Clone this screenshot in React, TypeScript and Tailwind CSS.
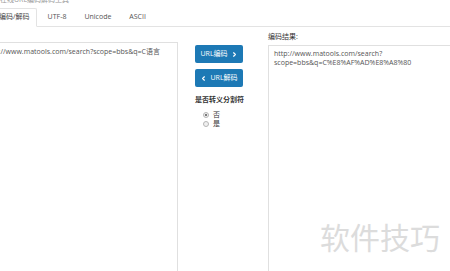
import React from "react";
import { ChevronRight, ChevronLeft } from "lucide-react";

const font = "font-['Open_Sans','Noto_Sans_CJK_SC',sans-serif]";

const Radio: React.FC<{ checked?: boolean; label: string }> = ({ checked, label }) => (
  <div className="flex items-center gap-[4px] h-[9px]">
    <span className="w-[6px] h-[6px] rounded-full border border-[#b5b5b5] bg-[#f0f0f0] flex items-center justify-center">
      {checked && <span className="w-[2px] h-[2px] rounded-full bg-[#555]" />}
    </span>
    <span className="text-[7px] leading-[9px] text-[#333]">{label}</span>
  </div>
);

const App: React.FC = () => {
  return (
    <div className={`w-[450px] h-[271px] overflow-hidden bg-white relative ${font}`}>
      {/* 页面标题（被截掉一半） */}
      <div className="h-[8px] overflow-hidden">
        <div className="-mt-[5px] text-[7px] leading-[9px] text-[#999]">在线URL编码解码工具</div>
      </div>

      {/* 标签页 */}
      <div className="flex h-[19px] border-b border-[#e3e3e3] text-[7px] text-[#555]">
        <div className="-ml-[10px] pl-[8px] pr-[6px] flex items-center border border-[#e3e3e3] border-b-white bg-white -mb-px rounded-t-[2px] text-[#444]">
          编码/解码
        </div>
        <div className="ml-[2px] px-[9px] flex items-center">UTF-8</div>
        <div className="px-[9px] flex items-center">Unicode</div>
        <div className="px-[9px] flex items-center">ASCII</div>
      </div>

      {/* 主体 */}
      <div className="flex pt-[4px]">
        <div className="-ml-[21px] w-[199px] pt-[11px] shrink-0">
          <div className="h-[260px] border border-[#e0e0e0] px-[5px] py-[4px] text-[7px] leading-[9px] text-[#555]">
            http://www.matools.com/search?scope=bbs&amp;q=C语言
          </div>
        </div>

        <div className="w-[90px] shrink-0 pl-[17px] pt-[14px] flex flex-col">
          <button className="w-[48px] h-[18px] bg-[#1d79b5] rounded-[2px] text-white text-[7px] flex items-center justify-center gap-[3px]">
            URL编码
            <ChevronRight size={7} strokeWidth={4} />
          </button>
          <button className="mt-[6px] w-[48px] h-[18px] bg-[#1d79b5] rounded-[2px] text-white text-[7px] flex items-center justify-center gap-[3px]">
            <ChevronLeft size={7} strokeWidth={4} />
            URL解码
          </button>
          <div className="mt-[8px] text-[7px] leading-[9px] font-bold text-[#333]">是否转义分割符</div>
          <div className="mt-[6px] pl-[8px] flex flex-col">
            <Radio checked label="否" />
            <Radio label="是" />
          </div>
        </div>

        <div className="w-[200px] shrink-0 pt-[1px]">
          <div className="text-[7px] leading-[9px] text-[#333]">编码结果:</div>
          <div className="mt-[4px] h-[240px] border border-[#e0e0e0] px-[5px] py-[3px] text-[7px] leading-[9px] text-[#555]">
            http://www.matools.com/search?
            <br />
            scope=bbs&amp;q=C%E8%AF%AD%E8%A8%80
          </div>
        </div>
      </div>

      {/* 水印 */}
      <div className="absolute left-[320px] top-[216px] text-[30px] leading-[40px] text-[#dcdcdc] font-['Noto_Sans_CJK_SC',sans-serif] pointer-events-none">
        软件技巧
      </div>
    </div>
  );
};

export default App;
